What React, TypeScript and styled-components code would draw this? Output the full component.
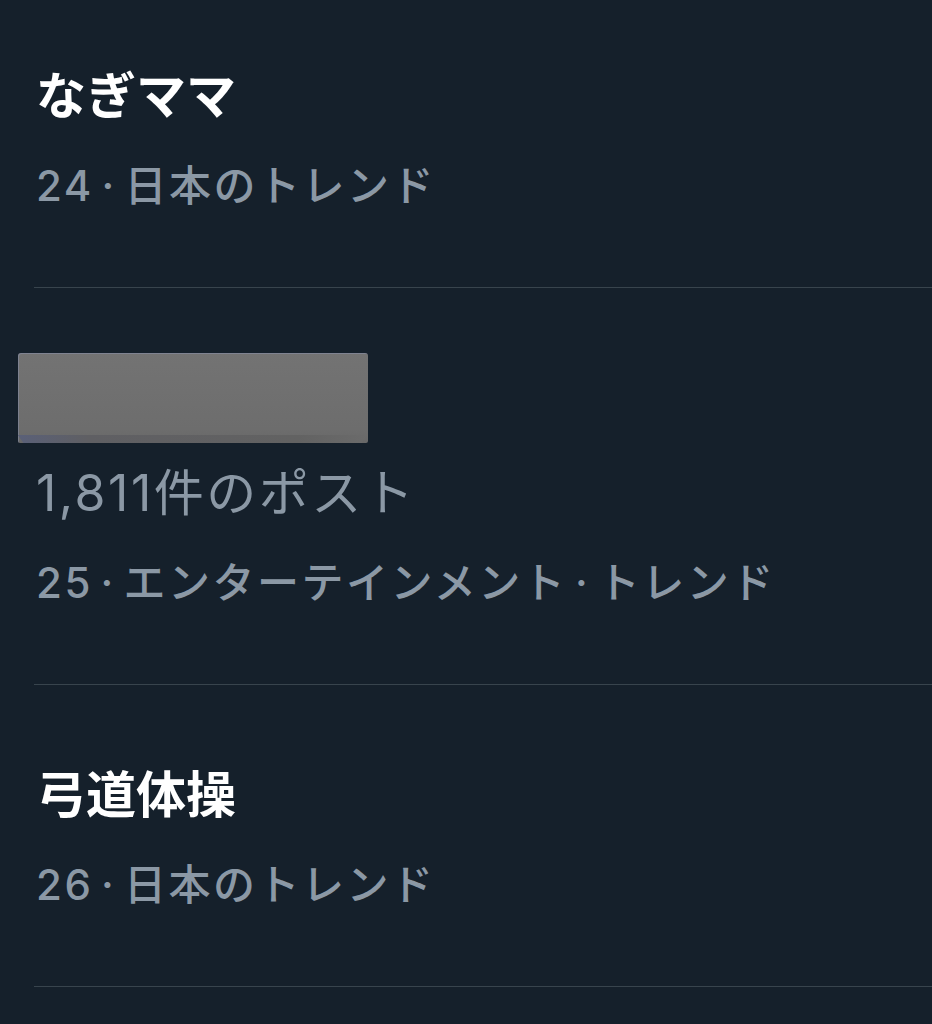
import React from 'react';
import styled, { createGlobalStyle } from 'styled-components';

const GlobalStyle = createGlobalStyle`
  html, body {
    margin: 0;
    padding: 0;
    background: #15202b;
  }
  body {
    font-family: Inter, "Noto Sans CJK JP", sans-serif;
    -webkit-font-smoothing: antialiased;
  }
`;

const Page = styled.div`
  width: 932px;
  height: 1024px;
  overflow: hidden;
  background: #15202b;
`;

const Row = styled.div<{ $first?: boolean }>`
  display: flex;
  flex-direction: column;
  margin-left: 34px;
  padding: ${p => (p.$first ? '66px' : '80px')} 0 76px 2px;
  border-bottom: 1px solid #38444d;
`;

const Title = styled.div`
  position: relative;
  height: 60px;
  line-height: 60px;
  font-size: 50px;
  font-weight: 700;
  color: #ffffff;
  white-space: nowrap;
`;

// grey block covering the hidden trend name
const Redaction = styled.div`
  position: absolute;
  left: -18px;
  top: -15px;
  width: 350px;
  height: 90px;
  border-radius: 3px 3px 2px 2px;
  background: linear-gradient(180deg, #737373 0%, #6d6d6d 85%, #686868 100%);
  box-shadow: inset 1px 1px 0 rgba(150, 160, 200, 0.35);

  &::after {
    content: '';
    position: absolute;
    left: 0;
    right: 0;
    bottom: 0;
    height: 8px;
    background: linear-gradient(90deg, #5a6078 0%, #5f5f63 20%, #626262 80%, #6b6b6b 100%);
    clip-path: polygon(0 0, 100% 0, 98% 100%, 1.5% 100%);
  }
`;

const Posts = styled.div`
  margin-top: 35px;
  height: 60px;
  line-height: 60px;
  font-size: 50px;
  font-weight: 400;
  letter-spacing: 2.5px;
  color: #8b98a5;
  white-space: nowrap;
`;

const Meta = styled.div`
  margin-top: 35px;
  height: 50px;
  line-height: 50px;
  font-size: 42px;
  font-weight: 500;
  letter-spacing: 2.5px;
  word-spacing: -6px;
  color: #8b98a5;
  white-space: nowrap;
`;

type Trend = {
  title: string;
  meta: string;
  posts?: string;
  hidden?: boolean;
};

const trends: Trend[] = [
  { title: 'なぎママ', meta: '24 · 日本のトレンド' },
  { title: '', meta: '25 · エンターテインメント · トレンド', posts: '1,811件のポスト', hidden: true },
  { title: '弓道体操', meta: '26 · 日本のトレンド' },
];

export default function App() {
  return (
    <>
      <GlobalStyle />
      <Page>
        {trends.map((t, i) => (
          <Row key={t.meta} $first={i === 0}>
            <Title>
              {t.title || '\u00a0'}
              {t.hidden && <Redaction />}
            </Title>
            {t.posts && <Posts>{t.posts}</Posts>}
            <Meta>{t.meta}</Meta>
          </Row>
        ))}
      </Page>
    </>
  );
}
